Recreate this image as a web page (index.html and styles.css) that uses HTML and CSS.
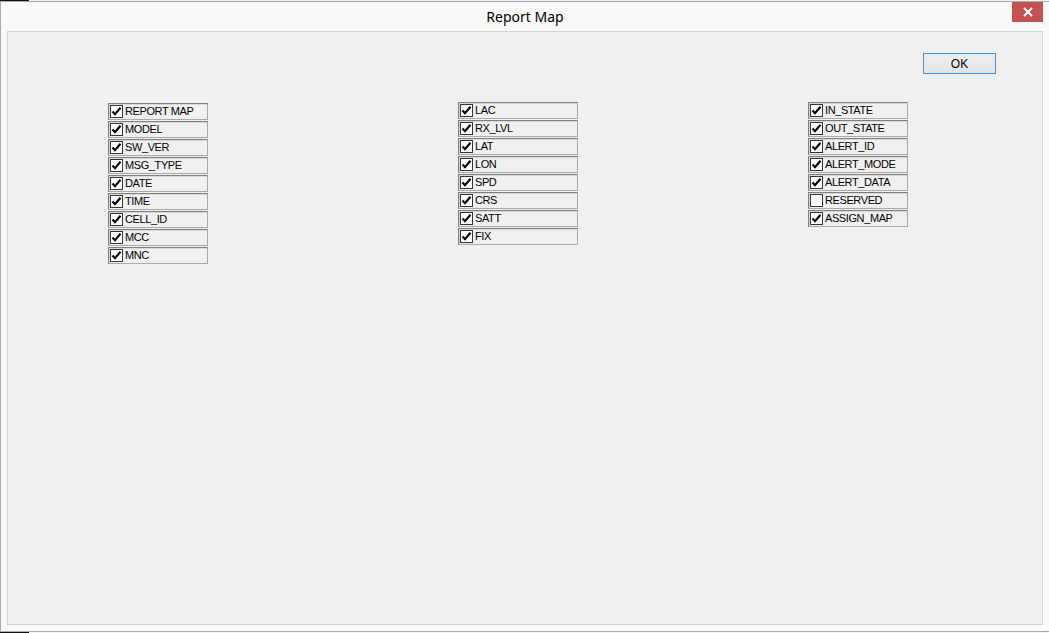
FILE: index.html
```html
<!DOCTYPE html>
<html>
<head>
<meta charset="utf-8">
<title>Report Map</title>
<link rel="stylesheet" href="styles.css">
</head>
<body>
<div class="strip strip-top"><span class="strip-black"></span></div>
<div class="window">
  <div class="titlebar">
    <span></span>
    <div class="title">Report Map</div>
    <div class="close">
      <svg width="12" height="10" viewBox="0 0 12 10"><path d="M2 1 L10 9 M10 1 L2 9" stroke="#fff" stroke-width="2" fill="none"/></svg>
    </div>
  </div>
  <div class="panel">
    <div class="okrow"><button class="ok">OK</button></div>
    <div class="columns">
      <div class="col col1">
        <div class="item"><span class="cb on"></span><span class="lbl">REPORT MAP</span></div>
        <div class="item"><span class="cb on"></span><span class="lbl">MODEL</span></div>
        <div class="item"><span class="cb on"></span><span class="lbl">SW_VER</span></div>
        <div class="item"><span class="cb on"></span><span class="lbl">MSG_TYPE</span></div>
        <div class="item"><span class="cb on"></span><span class="lbl">DATE</span></div>
        <div class="item"><span class="cb on"></span><span class="lbl">TIME</span></div>
        <div class="item"><span class="cb on"></span><span class="lbl">CELL_ID</span></div>
        <div class="item"><span class="cb on"></span><span class="lbl">MCC</span></div>
        <div class="item"><span class="cb on"></span><span class="lbl">MNC</span></div>
      </div>
      <div class="col col2">
        <div class="item"><span class="cb on"></span><span class="lbl">LAC</span></div>
        <div class="item"><span class="cb on"></span><span class="lbl">RX_LVL</span></div>
        <div class="item"><span class="cb on"></span><span class="lbl">LAT</span></div>
        <div class="item"><span class="cb on"></span><span class="lbl">LON</span></div>
        <div class="item"><span class="cb on"></span><span class="lbl">SPD</span></div>
        <div class="item"><span class="cb on"></span><span class="lbl">CRS</span></div>
        <div class="item"><span class="cb on"></span><span class="lbl">SATT</span></div>
        <div class="item"><span class="cb on"></span><span class="lbl">FIX</span></div>
      </div>
      <div class="col col3">
        <div class="item"><span class="cb on"></span><span class="lbl">IN_STATE</span></div>
        <div class="item"><span class="cb on"></span><span class="lbl">OUT_STATE</span></div>
        <div class="item"><span class="cb on"></span><span class="lbl">ALERT_ID</span></div>
        <div class="item"><span class="cb on"></span><span class="lbl">ALERT_MODE</span></div>
        <div class="item"><span class="cb on"></span><span class="lbl">ALERT_DATA</span></div>
        <div class="item"><span class="cb"></span><span class="lbl">RESERVED</span></div>
        <div class="item"><span class="cb on"></span><span class="lbl">ASSIGN_MAP</span></div>
      </div>
    </div>
  </div>
</div>
<div class="strip strip-bottom"><span class="strip-black"></span></div>
</body>
</html>
```

FILE: styles.css
```css
* { box-sizing: border-box; }
html, body { margin: 0; padding: 0; }
body {
  width: 1049px;
  height: 633px;
  overflow: hidden;
  background: #f9f9f9;
  font-family: "Liberation Sans", Arial, sans-serif;
}
.strip {
  height: 1px;
  background: #f4f4f4;
  display: flex;
}
.strip-black {
  width: 29px;
  height: 1px;
  background: #111;
}
.window {
  border-top: 1px solid #ababab;
  border-left: 1px solid #ababab;
  border-bottom: 1px solid #ababab;
  background: #f9f9f9;
  padding: 0 6px 6px 6px;
}
.titlebar {
  height: 29px;
  display: grid;
  grid-template-columns: 1fr auto 1fr;
  align-items: start;
}
.title {
  font-family: "Noto Sans", "Open Sans", sans-serif;
  font-size: 14px;
  color: #000;
  padding-top: 5px;
  line-height: 20px;
}
.close {
  justify-self: end;
  width: 31px;
  height: 20px;
  background: #c75050;
  display: flex;
  align-items: center;
  justify-content: center;
}
.panel {
  height: 594px;
  border: 1px solid #d4d4d4;
  background: #f0f0f0;
}
.okrow {
  display: flex;
  justify-content: flex-end;
  padding: 21px 46px 0 0;
}
.ok {
  width: 73px;
  height: 21px;
  border: 1px solid #3c94e6;
  background: linear-gradient(#efefef, #e3e3e3);
  font-family: "Liberation Sans", Arial, sans-serif;
  font-size: 12px;
  color: #000;
  padding: 0;
  margin: 0;
}
.columns {
  display: flex;
  padding-left: 100px;
  margin-top: 28px;
}
.col {
  display: flex;
  flex-direction: column;
  gap: 1px;
}
.col1 { width: 100px; margin-top: 1px; margin-right: 250px; }
.col2 { width: 120px; margin-right: 230px; }
.col3 { width: 100px; }
.item {
  height: 17px;
  border: 1px solid;
  border-color: #7f7f7f #a9a9a9 #a9a9a9 #7f7f7f;
  box-shadow: inset 1px 1px 0 #d8d8d8;
  display: flex;
  align-items: center;
  padding-left: 1px;
}
.cb {
  width: 13px;
  height: 13px;
  border: 1px solid #333;
  background: #fff;
  flex: none;
}
.cb.on {
  background: #fff url("data:image/svg+xml;utf8,<svg xmlns='http://www.w3.org/2000/svg' width='11' height='11' viewBox='0 0 11 11'><path d='M1.5 5.5 L4 8.2 L9.5 1.8' stroke='black' stroke-width='2.2' fill='none'/></svg>") center / 11px 11px no-repeat;
}
.lbl {
  font-size: 11px;
  letter-spacing: -0.4px;
  color: #000;
  margin-left: 2px;
  line-height: 13px;
}
```
